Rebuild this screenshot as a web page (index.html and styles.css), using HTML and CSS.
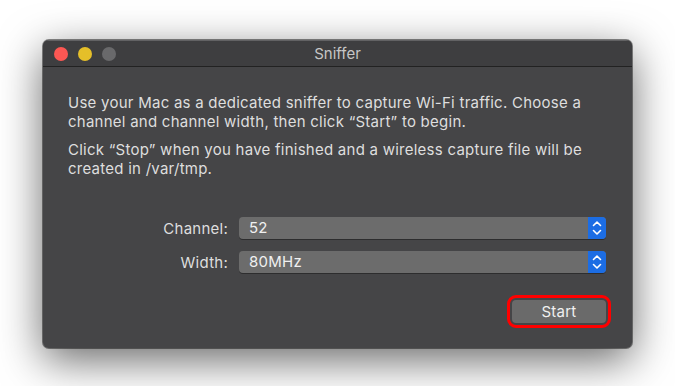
FILE: index.html
```html
<!DOCTYPE html>
<html lang="en">
<head>
    <meta charset="UTF-8">
    <title>Sniffer</title>
    <link rel="stylesheet" href="styles.css">
</head>
<body>
    <div class="window">
        <div class="titlebar">
            <div class="lights">
                <span class="light red"></span>
                <span class="light yellow"></span>
                <span class="light gray"></span>
            </div>
            <div class="title">Sniffer</div>
        </div>

        <div class="content">
            <p>Use your Mac as a dedicated sniffer to capture Wi-Fi traffic. Choose a channel and channel width, then click “Start” to begin.</p>
            <p class="second">Click “Stop” when you have finished and a wireless capture file will be created in /var/tmp.</p>

            <div class="form">
                <label>Channel:</label>
                <div class="popup">
                    <span class="value">52</span>
                    <span class="stepper">
                        <svg width="18" height="22" viewBox="0 0 18 22"><path d="M5.5 8.5 L9 5 L12.5 8.5 M5.5 13.5 L9 17 L12.5 13.5" fill="none" stroke="#fff" stroke-width="1.6" stroke-linecap="round" stroke-linejoin="round"/></svg>
                    </span>
                </div>

                <label>Width:</label>
                <div class="popup">
                    <span class="value">80MHz</span>
                    <span class="stepper">
                        <svg width="18" height="22" viewBox="0 0 18 22"><path d="M5.5 8.5 L9 5 L12.5 8.5 M5.5 13.5 L9 17 L12.5 13.5" fill="none" stroke="#fff" stroke-width="1.6" stroke-linecap="round" stroke-linejoin="round"/></svg>
                    </span>
                </div>
            </div>

            <div class="actions">
                <button class="start">Start</button>
            </div>
        </div>
    </div>
</body>
</html>
```

FILE: styles.css
```css
html {
    background: #fff;
}

body {
    margin: 0;
    min-height: 386px;
    box-sizing: border-box;
    padding: 40px 0 0 43px;
    font-family: Inter, "Liberation Sans", Arial, sans-serif;
}

.window {
    width: 589px;
    height: 308px;
    background: #454547;
    border-radius: 6px;
    box-shadow: 0 0 0 1px rgba(0, 0, 0, 0.45), 0 12px 44px rgba(0, 0, 0, 0.6);
    display: flex;
    flex-direction: column;
    overflow: hidden;
}

.titlebar {
    height: 25px;
    background: #3e3e40;
    border-top: 1px solid #626264;
    border-bottom: 1px solid #222;
    display: flex;
    align-items: center;
    position: relative;
}

.lights {
    display: flex;
    gap: 10px;
    padding-left: 11px;
}

.light {
    width: 14px;
    height: 14px;
    border-radius: 50%;
}

.light.red { background: #fc5753; }
.light.yellow { background: #e5bf29; }
.light.gray { background: #69696b; }

.title {
    position: absolute;
    left: 0;
    right: 0;
    text-align: center;
    color: #c6c6c6;
    font-size: 15px;
}

.content {
    padding: 26px 26px 0 25px;
    color: #dedede;
    font-size: 15px;
    line-height: 19px;
    letter-spacing: 0.25px;
}

.content p {
    margin: 0;
}

.content p.second {
    margin-top: 9px;
}

.form {
    margin-top: 39px;
    display: grid;
    grid-template-columns: 160px 1fr;
    column-gap: 11px;
    row-gap: 12px;
    align-items: center;
}

.form label {
    text-align: right;
    color: #dedede;
}

.popup {
    height: 22px;
    display: flex;
    background: #6c6c6c;
    border-radius: 4px;
    overflow: hidden;
    box-shadow: 0 1px 0 rgba(0, 0, 0, 0.35);
}

.popup .value {
    flex: 1;
    padding-left: 10px;
    line-height: 22px;
    color: #f0f0f0;
}

.stepper {
    width: 18px;
    background: #1c6de4;
    display: flex;
}

.actions {
    margin-top: 27px;
    display: flex;
    justify-content: flex-end;
}

.start {
    width: 94px;
    height: 23px;
    border: none;
    border-radius: 4px;
    background: #6a6a6a;
    color: #f0f0f0;
    font-family: inherit;
    font-size: 15px;
    letter-spacing: 0.25px;
    padding: 0;
    outline: 3px solid #ff0000;
    outline-offset: 2px;
}
```
